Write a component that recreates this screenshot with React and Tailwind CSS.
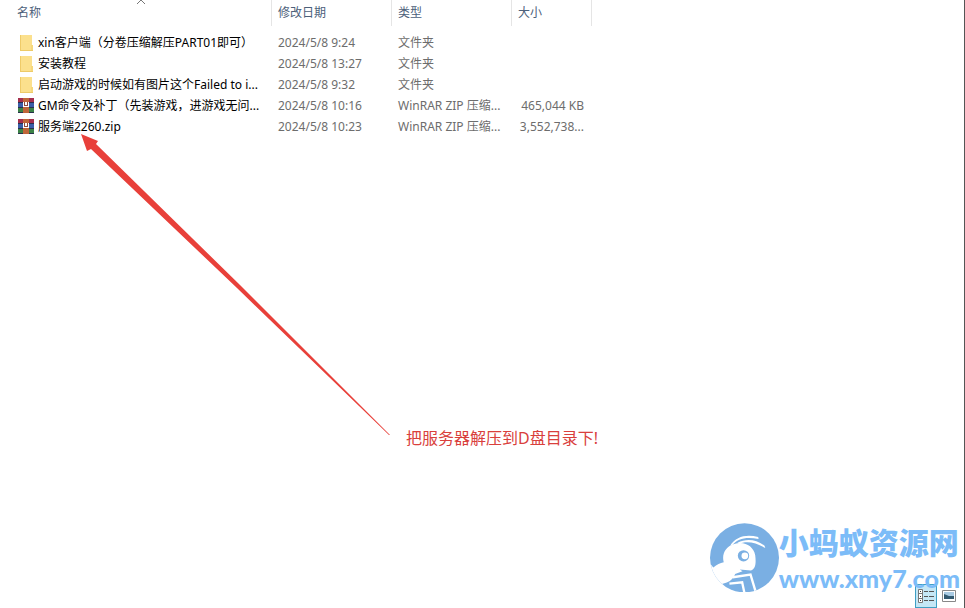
import React from "react";

const files = [
  { name: "xin客户端（分卷压缩解压PART01即可）", date: "2024/5/8 9:24", type: "文件夹", size: "", kind: "folder" },
  { name: "安装教程", date: "2024/5/8 13:27", type: "文件夹", size: "", kind: "folder" },
  { name: "启动游戏的时候如有图片这个Failed to i...", date: "2024/5/8 9:32", type: "文件夹", size: "", kind: "folder" },
  { name: "GM命令及补丁（先装游戏，进游戏无问...", date: "2024/5/8 10:16", type: "WinRAR ZIP 压缩...", size: "465,044 KB", kind: "zip" },
  { name: "服务端2260.zip", date: "2024/5/8 10:23", type: "WinRAR ZIP 压缩...", size: "3,552,738...", kind: "zip" },
];

function FolderIcon() {
  return (
    <svg viewBox="0 0 16 16" className="h-4 w-4 shrink-0" aria-hidden="true">
      <path d="M2 0h12v16H2z" fill="#fbe08d" />
      <path d="M2 0h1v16H2z" fill="#efcb69" />
      <path d="M13 10h2v6h-2z" fill="#f6d87c" />
      <path d="M2 15h13v1H2z" fill="#edca68" />
    </svg>
  );
}

function ZipIcon() {
  return (
    <svg viewBox="0 0 16 16" className="h-4 w-4 shrink-0" aria-hidden="true">
      <path d="M0 0h16v5H0z" fill="#a52f4d" />
      <path d="M0 5h16v5H0z" fill="#3b5ea8" />
      <path d="M0 10h16v5H0z" fill="#3c8347" />
      <path d="M0 4h16v1H0zM0 9h16v1H0zM0 14h16v1H0z" fill="#28304d" />
      <path d="M5 0h6v15H5z" fill="#c0663a" />
      <path d="M5 4h6v5H5z" fill="#8d4a3c" />
      <path d="M5 4h1v4h4V4h1v5H5zM7 4h2v3H7z" fill="#fff" />
    </svg>
  );
}

function AntLogo() {
  return (
    <svg viewBox="36 20 206 206" className="h-[69px] w-[69px] shrink-0" aria-hidden="true">
      <defs>
        <clipPath id="disc">
          <circle cx="139" cy="124" r="103" />
        </clipPath>
      </defs>
      <circle cx="139" cy="124" r="103" fill="#7aafe3" />
      <g clipPath="url(#disc)">
        <path
          d="M30 134L46 153C57 144 66 139 77 137C70 112 84 90 108 83C137 72 166 88 171 116C174 141 172 157 158 162L125 159L133 164L111 172C108 183 100 191 86 198L60 206L30 200Z"
          fill="#fff"
        />
        <path d="M103 86C118 66 146 60 181 68L180 62C144 53 114 60 96 88Z" fill="#fff" />
        <path d="M122 82C146 72 174 78 201 95L199 88C173 68 144 66 118 79Z" fill="#fff" />
        <path d="M104 182L157 174L172 224" fill="none" stroke="#fff" strokeWidth="7" />
        <path d="M94 201L132 197L139 230" fill="none" stroke="#fff" strokeWidth="7" />
        <circle cx="136" cy="118" r="17" fill="#7aafe3" />
        <circle cx="140" cy="118" r="10" fill="#fff" />
      </g>
    </svg>
  );
}

function DetailsIcon() {
  return (
    <svg viewBox="0 0 16 16" className="h-4 w-4" aria-hidden="true">
      <path d="M.5 1.5h4v13h-4zM.5 5.5h4M.5 10.5h4" fill="#fff" stroke="#777" />
      <path d="M2 3h1v1H2zM2 8h1v1H2zM2 12h1v1H2z" fill="#333" />
      <path d="M6 3.5h4M11 3.5h5M6 8.5h4M11 8.5h5M6 12.5h4M11 12.5h5" stroke="#555" />
    </svg>
  );
}

function ThumbnailIcon() {
  return (
    <svg viewBox="0 0 14 12" className="h-3 w-3.5" aria-hidden="true">
      <path d="M.5.5h13v11H.5z" fill="#fff" stroke="#888" />
      <path d="M2 2h10v7H2z" fill="#a9cbe3" />
      <path d="M2 4l5 2h5v3H2z" fill="#335a70" />
    </svg>
  );
}

export default function App() {
  return (
    <main className="relative flex min-h-screen flex-col overflow-hidden border-r border-[#555] bg-white font-['Noto_Sans','Noto_Sans_CJK_SC',sans-serif] text-xs">
      <table className="w-[592px] table-fixed border-separate border-spacing-0 text-left whitespace-nowrap">
        <colgroup>
          <col className="w-[272px]" />
          <col className="w-[120px]" />
          <col className="w-[120px]" />
          <col className="w-20" />
        </colgroup>
        <thead className="text-[#4c607a]">
          <tr className="h-[26px]">
            <th className="relative border-r border-[#e5e5e5] p-0 pl-[17px] font-normal">
              名称
              <svg viewBox="0 0 10 5" className="absolute top-0 left-[136px] h-[5px] w-2.5" aria-hidden="true">
                <path d="M1 4L5 0L9 4" fill="none" stroke="#777" />
              </svg>
            </th>
            <th className="border-r border-[#e5e5e5] p-0 pl-1.5 font-normal">修改日期</th>
            <th className="border-r border-[#e5e5e5] p-0 pl-1.5 font-normal">类型</th>
            <th className="border-r border-[#e5e5e5] p-0 pl-1.5 font-normal">大小</th>
          </tr>
        </thead>
        <tbody className="text-[#6d6d6d]">
          <tr className="h-1.5" aria-hidden="true" />
          {files.map((file) => (
            <tr key={file.name} className="h-[21px]">
              <td className="p-0 pl-[18px] text-black">
                <div className="flex items-center gap-1">
                  {file.kind === "folder" ? <FolderIcon /> : <ZipIcon />}
                  <span>{file.name}</span>
                </div>
              </td>
              <td className="p-0 pl-1.5">{file.date}</td>
              <td className="p-0 pl-1.5">{file.type}</td>
              <td className="p-0 pr-2 text-right">{file.size}</td>
            </tr>
          ))}
        </tbody>
      </table>

      {/* Annotation arrow and note over the file list */}
      <svg viewBox="0 0 310 302" className="absolute top-[134px] left-20 h-[302px] w-[310px]" aria-hidden="true">
        <path d="M1 0L18 7L16 10L160 151L310 301L309 301L157 154L11 15L7 17Z" fill="#e8403a" />
      </svg>
      <p className="absolute top-[426px] left-[406px] text-base text-[#d9403c]">把服务器解压到D盘目录下!</p>

      {/* View switcher */}
      <div className="mt-auto flex items-center justify-end gap-1 pr-2">
        <button type="button" aria-label="详细信息" className="flex h-6 w-[22px] items-center justify-center border border-[#3f9fc4] bg-[#c4e7f6]">
          <DetailsIcon />
        </button>
        <button type="button" aria-label="大缩略图" className="flex h-6 w-[15px] items-center justify-center">
          <ThumbnailIcon />
        </button>
      </div>

      {/* Watermark */}
      <div className="pointer-events-none absolute right-1 bottom-4 flex items-center text-[#7cbcf8]">
        <AntLogo />
        <div className="flex flex-col whitespace-nowrap">
          <span className="font-['Roboto','Noto_Sans_CJK_SC',sans-serif] text-3xl leading-10 font-black">小蚂蚁资源网</span>
          <span className="font-['Lato',sans-serif] text-[25px] leading-7 font-black">www.xmy7.com</span>
        </div>
      </div>
    </main>
  );
}
